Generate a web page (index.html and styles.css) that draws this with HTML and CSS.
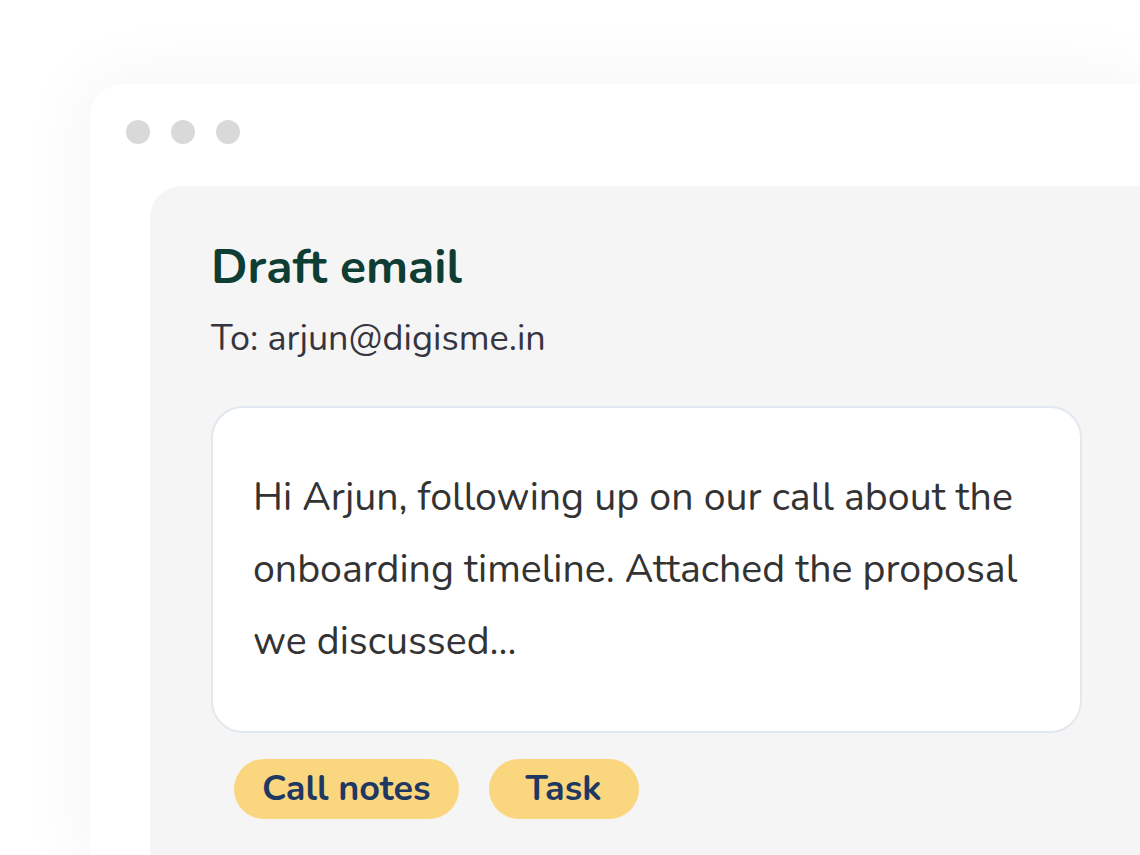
FILE: index.html
```html
<!DOCTYPE html>
<html>
<head>
<meta charset="utf-8">
<link rel="stylesheet" href="styles.css">
</head>
<body>
<div class="window">
  <div class="dots"><span class="dot"></span><span class="dot"></span><span class="dot"></span></div>
  <div class="panel">
    <h1 class="title">Draft email</h1>
    <p class="to">To: arjun@digisme.in</p>
    <div class="box">
      <p class="body-text">Hi Arjun, following up on our call about the onboarding timeline. Attached the proposal we discussed...</p>
    </div>
    <div class="chips">
      <span class="chip">Call notes</span>
      <span class="chip">Task</span>
    </div>
  </div>
</div>
</body>
</html>
```
FILE: styles.css
```css
html, body {
  margin: 0;
  padding: 0;
  background: #ffffff;
  width: 1140px;
  height: 855px;
  overflow: hidden;
}
body {
  font-family: "Nunito", "Lato", "Open Sans", sans-serif;
  padding-top: 84px;
  padding-left: 90px;
  box-sizing: border-box;
}
.window {
  width: 1050px;
  height: 771px;
  background: #ffffff;
  border-radius: 32px 0 0 0;
  box-shadow: 0 0 70px 10px rgba(0, 0, 0, 0.045);
  padding: 36px 0 0 36px;
  box-sizing: border-box;
  overflow: hidden;
}
.dots {
  display: flex;
  gap: 21px;
  height: 24px;
}
.dot {
  width: 24px;
  height: 24px;
  border-radius: 50%;
  background: #d9d9d9;
}
.panel {
  margin-top: 42px;
  margin-left: 24px;
  background: #f5f5f5;
  border-radius: 32px 0 0 0;
  height: 669px;
  padding: 53px 0 0 61px;
  box-sizing: border-box;
}
.title {
  margin: 0;
  font-size: 48px;
  line-height: 56px;
  font-weight: 700;
  color: #0e3d33;
}
.to {
  margin: 22px 0 0 0;
  font-size: 36px;
  line-height: 44px;
  color: #36353f;
}
.box {
  margin-top: 45px;
  width: 871px;
  height: 327px;
  box-sizing: border-box;
  background: #ffffff;
  border: 2px solid #e2e8f0;
  border-radius: 32px;
  padding: 53px 30px 0 40px;
}
.body-text {
  margin: 0;
  font-size: 39.3px;
  line-height: 72px;
  color: #333333;
}
.chips {
  display: flex;
  gap: 30px;
  margin: 26px 0 0 23px;
}
.chip {
  height: 60px;
  line-height: 60px;
  min-width: 150px;
  box-sizing: border-box;
  text-align: center;
  padding: 0 28px;
  border-radius: 30px;
  background: #fad77f;
  color: #1f3862;
  font-size: 36px;
  font-weight: 700;
}
```
